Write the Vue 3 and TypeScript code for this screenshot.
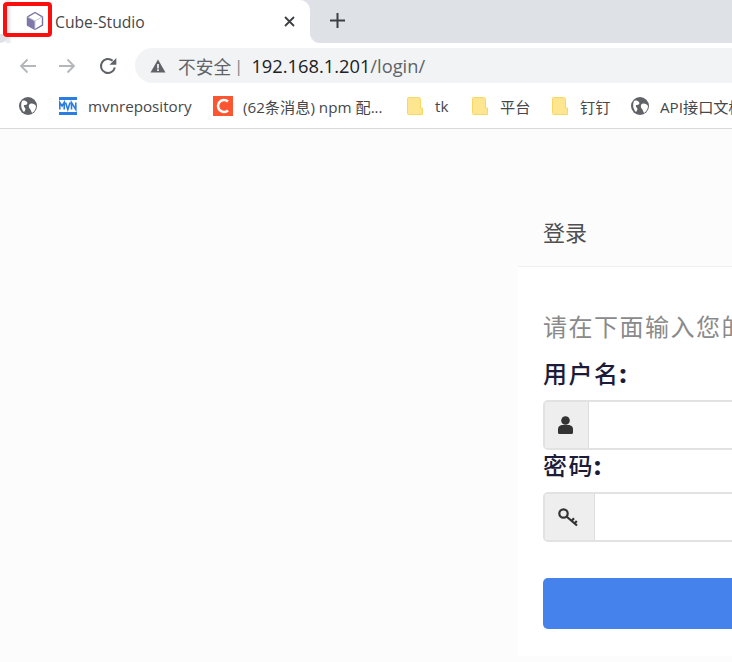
<script setup lang="ts">
interface Bookmark {
  label: string;
  icon: "globe" | "mvn" | "csdn" | "folder";
  width: number;
}

const bookmarks: Bookmark[] = [
  { label: "", icon: "globe", width: 40 },
  { label: "mvnrepository", icon: "mvn", width: 154 },
  { label: "(62条消息) npm 配...", icon: "csdn", width: 194 },
  { label: "tk", icon: "folder", width: 65 },
  { label: "平台", icon: "folder", width: 80 },
  { label: "钉钉", icon: "folder", width: 79 },
  { label: "API接口文档", icon: "globe", width: 120 },
];
</script>

<template>
  <div class="screen">
    <div class="tabstrip">
      <div class="tab">
        <svg class="favicon" width="20" height="20" viewBox="0 0 20 20">
          <path d="M10 1.5 17.5 5.8v8.4L10 18.5 2.5 14.2V5.8z" fill="#fff" stroke="#77749f" stroke-width="1.4" stroke-linejoin="round" />
          <path d="M2.5 5.8 10 10v8.5L2.5 14.2z" fill="#7d79aa" />
          <path d="M10 10 17.5 5.8M10 10v8.5M10 10 2.5 5.8" stroke="#c9c7dd" stroke-width="1" fill="none" />
        </svg>
        <span class="tab-title">Cube-Studio</span>
        <svg class="tab-close" width="11" height="11" viewBox="0 0 11 11">
          <path d="M1 1 10 10M10 1 1 10" stroke="#3c4043" stroke-width="1.8" />
        </svg>
      </div>
      <svg class="new-tab" width="15" height="15" viewBox="0 0 15 15">
        <path d="M7.5 0v15M0 7.500h15" stroke="#3c4043" stroke-width="2" />
      </svg>
    </div>

    <div class="toolbar">
      <svg class="nav" width="18" height="16" viewBox="0 0 18 16">
        <path d="M17 8H2M8.500 1.500 2 8l6.500 6.500" fill="none" stroke="#b4b6ba" stroke-width="1.800" />
      </svg>
      <svg class="nav forward" width="18" height="16" viewBox="0 0 18 16">
        <path d="M1 8h15M9.500 1.500 16 8l-6.500 6.500" fill="none" stroke="#b4b6ba" stroke-width="1.800" />
      </svg>
      <svg class="nav reload" width="18" height="18" viewBox="0 0 18 18">
        <path d="M15.800 10.500A7 7 0 1 1 13.600 3.800" fill="none" stroke="#5f6368" stroke-width="2" />
        <path d="M17.300 1v6.800h-6.800z" fill="#5f6368" />
      </svg>
      <div class="omnibox">
        <svg width="16" height="14" viewBox="0 0 16 14">
          <path d="M8 0.500 15.500 13.500H0.500z" fill="#5f6368" />
          <path d="M7.200 5h1.600v4.500H7.200zM7.200 10.300h1.600v1.600H7.200z" fill="#fff" />
        </svg>
        <span class="insecure">不安全</span>
        <span class="divider">|</span>
        <span class="url"><b>192.168.1.201</b>/login/</span>
      </div>
    </div>

    <div class="bookmarks">
      <div v-for="(b, i) in bookmarks" :key="i" class="bookmark" :style="{ width: b.width + 'px' }">
        <svg v-if="b.icon === 'globe'" width="18" height="18" viewBox="0 0 18 18">
          <circle cx="9" cy="9" r="9" fill="#5f6368" />
          <path d="M3 4c2-1 4 0 5 1s0 3-2 3-1 2 0 3 0 3-1 4C3 13 1 9 3 4zM11 7c2-1 5 0 6 2 0 3-2 6-4 7-1-2-1-3-2-4s-2-4 0-5z" fill="#fff" />
        </svg>
        <svg v-else-if="b.icon === 'mvn'" width="18" height="18" viewBox="0 0 18 18">
          <rect x="0" y="0" width="18" height="3" fill="#2a7de1" />
          <rect x="0" y="15" width="18" height="3" fill="#2a7de1" />
          <path d="M0.800 12.500V5.500L3 9l2.200-3.500V12.500M6.500 5.500 8.800 12.500l2.300-7M12.500 12.500V5.500L16.800 12.500V5.500" fill="none" stroke="#2a7de1" stroke-width="1.600" />
        </svg>
        <svg v-else-if="b.icon === 'csdn'" class="csdn" width="20" height="20" viewBox="0 0 20 20">
          <rect width="20" height="20" fill="#fc5531" />
          <path d="M15 5.500A6 6 0 1 0 15 14.500" fill="none" stroke="#fff" stroke-width="2.600" />
        </svg>
        <svg v-else width="17" height="18" viewBox="0 0 17 18">
          <path d="M1.500 0.500H11.500Q13.500 0.500 13.500 2.500V11H15.500V17.500H1.500Q0.500 17.500 0.500 16.500V1.500Q0.500 0.500 1.500 0.500z" fill="#fde68f" stroke="#f8d862" />
        </svg>
        <span v-if="b.label" class="bookmark-label">{{ b.label }}</span>
      </div>
    </div>

    <div class="page">
      <section class="panel">
        <div class="panel-heading">登录</div>
        <div class="panel-body">
          <p class="lead">请在下面输入您的登录信息</p>
          <label class="field-label">用户名<b>:</b></label>
          <div class="input-group">
            <span class="addon user-addon">
              <svg width="15" height="18" viewBox="0 0 15 18">
                <circle cx="7.500" cy="4.500" r="4.300" fill="#333" />
                <path d="M0 16.500V13Q0 10 3.500 9H11.500Q15 10 15 13V16.500Q15 18 13.500 18H1.500Q0 18 0 16.500z" fill="#333" />
              </svg>
            </span>
            <div class="control"></div>
          </div>
          <label class="field-label">密码<b>:</b></label>
          <div class="input-group">
            <span class="addon key-addon">
              <svg width="20" height="19" viewBox="0 0 20 19">
                <circle cx="5.500" cy="5.500" r="4.200" fill="none" stroke="#333" stroke-width="2.200" />
                <path d="M8.500 8.500 19 17.500M13.500 13 16 10.300M16.500 15.500 18.800 13" fill="none" stroke="#333" stroke-width="2.200" />
              </svg>
            </span>
            <div class="control"></div>
          </div>
          <button class="submit" type="button"></button>
        </div>
      </section>
    </div>

    <div class="annotation"></div>
  </div>
</template>

<style>
html,
body {
  margin: 0;
  overflow: hidden;
}
</style>

<style scoped>
.screen {
  position: relative;
  width: 732px;
  height: 662px;
  overflow: hidden;
  display: flex;
  flex-direction: column;
  background: #fcfcfc;
  font-family: "Open Sans", "Noto Sans CJK SC", sans-serif;
  color: #3c4043;
}

.tabstrip {
  height: 43px;
  flex: none;
  display: flex;
  align-items: center;
  background: #dee1e6;
}

.tab {
  position: relative;
  width: 310px;
  height: 43px;
  box-sizing: border-box;
  padding: 0 15px 0 25px;
  display: flex;
  align-items: center;
  background: linear-gradient(90deg, #fff 5px, #e9eaec 7px, #e9eaec 9px, #fff 12px);
  border-radius: 0 10px 0 0;
}

/* rounded foot of the tab, both sides */
.tab::before {
  content: "";
  position: absolute;
  left: 0;
  bottom: 0;
  width: 9px;
  height: 9px;
  background: #dee1e6;
  border-bottom-right-radius: 9px;
}

.tab::after {
  content: "";
  position: absolute;
  left: 100%;
  bottom: 0;
  width: 10px;
  height: 10px;
  background: radial-gradient(circle at 100% 0, #dee1e6 9.5px, #fff 10.5px);
}

.favicon {
  flex: none;
  margin-top: -1px;
}

.tab-title {
  margin-left: 10px;
  font-size: 15.700px;
  color: #45474a;
  flex: 1;
}

.tab-close {
  flex: none;
  margin-top: -1px;
}

.new-tab {
  margin: -2px 0 0 20px;
}

.toolbar {
  height: 40px;
  flex: none;
  box-sizing: border-box;
  padding: 5px 0 0 19px;
  display: flex;
  align-items: center;
  background: #fff;
}

.nav {
  flex: none;
  margin-right: 21px;
}

.forward {
  margin-right: 23px;
}

.reload {
  margin-right: 18px;
}

.omnibox {
  flex: 1;
  height: 35px;
  box-sizing: border-box;
  padding-left: 15px;
  display: flex;
  align-items: center;
  background: #f1f3f4;
  border-radius: 18px 0 0 18px;
}

.insecure {
  margin-left: 12px;
  color: #5f6368;
  font-size: 17.700px;
}

.divider {
  margin: 0 8px 0 3px;
  font-size: 17px;
  color: #80868b;
}

.url {
  color: #5f6368;
  font-size: 18.300px;
}

.url b {
  font-weight: 400;
  color: #202124;
}

.bookmarks {
  height: 46px;
  flex: none;
  box-sizing: border-box;
  padding-left: 19px;
  display: flex;
  align-items: center;
  background: #fff;
  border-bottom: 1px solid #d9d9d9;
  white-space: nowrap;
}

.bookmark {
  flex: none;
  display: flex;
  align-items: center;
  gap: 11px;
}

.csdn {
  margin-right: -1px;
}

.bookmark-label {
  font-size: 15.200px;
  color: #45474a;
}

.page {
  flex: 1;
  padding: 71px 0 0 518px;
}

.panel {
  width: 500px;
  height: 456px;
  display: flex;
  flex-direction: column;
}

.panel-heading {
  height: 67px;
  box-sizing: border-box;
  padding: 17px 25px 0;
  font-size: 22px;
  line-height: 30px;
  color: #4f4f4f;
  border-bottom: 1px solid #f0f0f0;
  background: #fcfcfc;
}

.panel-body {
  flex: 1;
  padding: 43px 25px 0;
  background: #fff;
}

.lead {
  margin: 0 0 14px;
  font-size: 24px;
  line-height: 34px;
  letter-spacing: 1.500px;
  color: #8a8a8a;
}

.field-label {
  display: block;
  font-size: 24px;
  font-weight: 500;
  line-height: 32px;
  letter-spacing: 1.500px;
  color: #1c1c3a;
}

.field-label b {
  font-weight: 800;
}

.input-group {
  display: flex;
  height: 50px;
  margin-top: 10px;
  box-sizing: border-box;
  border: 2px solid #e2e2e2;
  border-radius: 5px;
  overflow: hidden;
}

.addon {
  display: flex;
  flex: none;
  align-items: center;
  justify-content: center;
  background: #eee;
  border-right: 1px solid #ddd;
  box-sizing: border-box;
}

.user-addon {
  width: 44px;
  padding-right: 2px;
}

.key-addon {
  width: 50px;
  padding-right: 4px;
}

.control {
  flex: 1;
  background: #fff;
}

.submit {
  display: block;
  width: 100%;
  height: 51px;
  margin-top: 36px;
  border: 0;
  border-radius: 5px;
  background: #4582ec;
}

.annotation {
  position: absolute;
  left: 3px;
  top: 2px;
  width: 49px;
  height: 35px;
  box-sizing: border-box;
  border: 4px solid #fa0f0f;
  border-radius: 4px;
}
</style>
